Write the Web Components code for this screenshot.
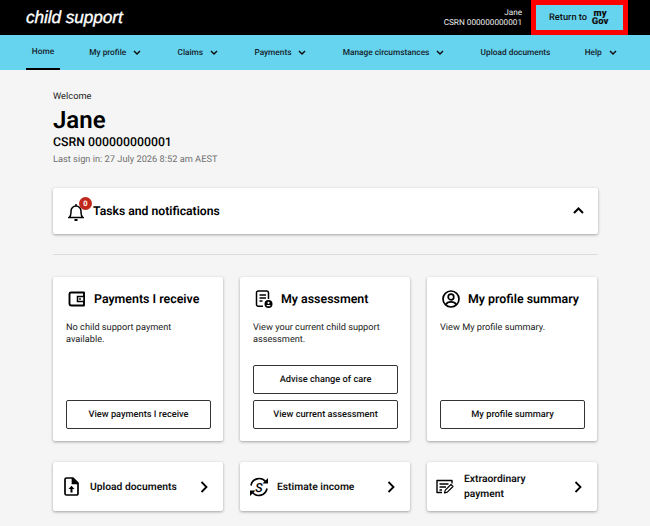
<!DOCTYPE html>
<html lang="en">
<head>
<meta charset="utf-8">
<title>Child support</title>
<style>
  html, body { margin: 0; padding: 0; }
  body { background: #f5f5f5; font-family: Roboto, "Liberation Sans", sans-serif; color: #000; width: 650px; height: 526px; overflow: hidden; text-rendering: geometricPrecision; }
</style>
</head>
<body>
<cs-header name="Jane" csrn="CSRN 000000000001"></cs-header>
<cs-nav>
  <cs-nav-item active style="width:34px;margin-right:-7px">Home</cs-nav-item>
  <cs-nav-item menu>My profile</cs-nav-item>
  <cs-nav-item menu>Claims</cs-nav-item>
  <cs-nav-item menu>Payments</cs-nav-item>
  <cs-nav-item menu>Manage circumstances</cs-nav-item>
  <cs-nav-item>Upload documents</cs-nav-item>
  <cs-nav-item menu style="margin-left:-2px">Help</cs-nav-item>
</cs-nav>
<cs-main>
  <cs-welcome name="Jane" csrn="CSRN 000000000001" signin="Last sign in: 27 July 2026 8:52 am AEST"></cs-welcome>
  <cs-tasks count="0">Tasks and notifications</cs-tasks>
  <cs-divider></cs-divider>
  <cs-grid>
    <cs-card heading="Payments I receive">
      <svg slot="icon" width="20" height="20" viewBox="0 0 20 20" fill="none" stroke="#000" stroke-width="1.9"><path d="M4 3.500h13v13H4.500A2 2 0 0 1 2.500 14.500V5A1.500 1.500 0 0 1 4 3.500z" stroke-linejoin="round"/><rect x="10.500" y="7.500" width="6.500" height="5" fill="#fff" stroke-width="1.500"/><circle cx="13" cy="10" r=".9" fill="#000" stroke="none"/></svg>
      No child support payment available.
      <cs-button slot="actions">View payments I receive</cs-button>
    </cs-card>
    <cs-card heading="My assessment">
      <svg slot="icon" width="20" height="20" viewBox="0 0 20 20" fill="none" stroke="#000" stroke-width="1.500"><path d="M9 17.200H4.200A1.700 1.700 0 0 1 2.500 15.500V3.700A1.700 1.700 0 0 1 4.200 2h8.600a1.700 1.700 0 0 1 1.700 1.700V10" stroke-linejoin="round"/><path d="M5.500 6h6.500M5.500 9h6.500M5.500 12h3"/><circle cx="14.500" cy="15" r="4" fill="#000" stroke="none"/><circle cx="14.500" cy="13.800" r="1.100" fill="#fff" stroke="none"/><path d="M12.700 16.600h3.600" stroke="#fff" stroke-width="1.200"/></svg>
      View your current child support assessment.
      <cs-button slot="actions">Advise change of care</cs-button>
      <cs-button slot="actions">View current assessment</cs-button>
    </cs-card>
    <cs-card heading="My profile summary">
      <svg slot="icon" width="20" height="20" viewBox="0 0 20 20" fill="none" stroke="#000" stroke-width="1.700"><circle cx="10" cy="10" r="8"/><circle cx="10" cy="8" r="2.800"/><path d="M4.800 15.500c1-2 3-2.700 5.200-2.700s4.200.7 5.200 2.700"/></svg>
      View My profile summary.
      <cs-button slot="actions">My profile summary</cs-button>
    </cs-card>
    <cs-link>
      <svg slot="icon" width="15" height="19" viewBox="0 0 15 19" fill="none" stroke="#000" stroke-width="1.700"><path d="M2.500 1h6.500l5 5V16.500A1.500 1.500 0 0 1 12.500 18h-10A1.500 1.500 0 0 1 1 16.500v-14A1.500 1.500 0 0 1 2.500 1z" stroke-linejoin="round"/><path d="M8.500 1v5.500H14" fill="#000"/><path d="M7.500 15.500v-4.500" stroke-width="2"/><path d="M4.500 12l3-3.200 3 3.200z" fill="#000" stroke="none"/></svg>
      Upload documents
    </cs-link>
    <cs-link>
      <svg slot="icon" width="22" height="22" viewBox="0 0 22 22" fill="none" stroke="#000" stroke-width="1.600"><path d="M3 9.500A8.300 8.300 0 0 1 17.500 5.500"/><path d="M19 12.500A8.300 8.300 0 0 1 4.500 16.500"/><path d="M20 2v5.500H14.500z" fill="#000" stroke="none"/><path d="M2 20v-5.500H7.500z" fill="#000" stroke="none"/><text x="11" y="15.500" text-anchor="middle" font-family="Roboto" font-size="12.500" font-style="italic" font-weight="500" fill="#000" stroke="none">S</text></svg>
      Estimate income
    </cs-link>
    <cs-link>
      <svg slot="icon" width="19" height="15" viewBox="0 0 19 15" fill="none" stroke="#000" stroke-width="1.400"><path d="M6 13.500H1V1.500h15v3" stroke-linejoin="round"/><path d="M3.500 5h9M3.500 8h6.500M3.500 11h2.500"/><path d="M8.500 14l.8-2.800L15 5.500l2 2-5.700 5.700z" stroke-width="1.200" stroke-linejoin="round"/></svg>
      <span style="display:block;width:70px">Extraordinary payment</span>
    </cs-link>
  </cs-grid>
</cs-main>

<script>
// header bar with the logo, the signed in user and the way back to myGov
class CsHeader extends HTMLElement {
  constructor() {
    super();
    this.attachShadow({ mode: 'open' }).innerHTML = `
      <style>
        :host { display: flex; align-items: center; height: 35px; background: #000; color: #fff; box-sizing: border-box; padding: 0 22px 0 26px; }
        .logo { font: italic 400 17.300px "Liberation Sans", Arial, sans-serif; -webkit-text-stroke: .35px #fff; letter-spacing: -.1px; flex: 1; margin-bottom: 1px; }
        .user { font-size: 8.200px; line-height: 10px; text-align: right; color: #eee; margin-right: 9px; }
        .back { display: flex; align-items: center; box-sizing: border-box; width: 97px; height: 35px; border: 5px solid #f00; background: #66d3ef; color: #111; font-size: 9.300px; font-weight: 500; padding-left: 13px; }
        .gov { width: 18px; margin: 1px 0 0 4px; font: 900 9.500px/8.500px Roboto, sans-serif; text-align: center; }
      </style>
      <div class="logo">child support</div>
      <div class="user"><div>${this.getAttribute('name')}</div><div>${this.getAttribute('csrn')}</div></div>
      <div class="back"><span>Return to</span><div class="gov">my Gov</div></div>`;
  }
}
customElements.define('cs-header', CsHeader);

class CsNav extends HTMLElement {
  constructor() {
    super();
    this.attachShadow({ mode: 'open' }).innerHTML = `
      <style>
        :host { display: flex; gap: 36.250px; height: 35px; background: #66d3ef; padding-left: 26px; box-sizing: border-box; }
      </style>
      <slot></slot>`;
  }
}
customElements.define('cs-nav', CsNav);

class CsNavItem extends HTMLElement {
  constructor() {
    super();
    const chevron = this.hasAttribute('menu')
      ? '<svg width="8" height="6" viewBox="0 0 8 6" fill="none" stroke="#111" stroke-width="1.500"><path d="M1 1l3 3 3-3"/></svg>'
      : '';
    this.attachShadow({ mode: 'open' }).innerHTML = `
      <style>
        :host { display: flex; align-items: center; justify-content: center; gap: 7px; height: 35px; box-sizing: border-box; font-size: 8.300px; font-weight: 500; color: #13232a; white-space: nowrap; }
        :host([active]) { border-bottom: 2px solid #000; }
      </style>
      <slot></slot>${chevron}`;
  }
}
customElements.define('cs-nav-item', CsNavItem);

class CsMain extends HTMLElement {
  constructor() {
    super();
    this.attachShadow({ mode: 'open' }).innerHTML = `
      <style>
        :host { display: block; padding: 20px 52px 0 53px; }
      </style>
      <slot></slot>`;
  }
}
customElements.define('cs-main', CsMain);

class CsWelcome extends HTMLElement {
  constructor() {
    super();
    this.attachShadow({ mode: 'open' }).innerHTML = `
      <style>
        :host { display: block; }
        .hi { font-size: 9.300px; line-height: 14px; color: #222; }
        h1 { margin: 2px 0 0; font-size: 24px; line-height: 28px; font-weight: 600; color: #000; }
        .csrn { font-size: 12.300px; line-height: 16px; font-weight: 500; margin-top: 1px; }
        .last { font-size: 9.250px; line-height: 14px; color: #707070; margin-top: 2px; }
      </style>
      <div class="hi">Welcome</div>
      <h1>${this.getAttribute('name')}</h1>
      <div class="csrn">${this.getAttribute('csrn')}</div>
      <div class="last">${this.getAttribute('signin')}</div>`;
  }
}
customElements.define('cs-welcome', CsWelcome);

class CsTasks extends HTMLElement {
  constructor() {
    super();
    this.attachShadow({ mode: 'open' }).innerHTML = `
      <style>
        :host { display: flex; align-items: center; position: relative; height: 46px; margin-top: 21px; background: #fff; border-radius: 2px; box-shadow: 0 1px 3px rgba(0,0,0,.35); padding: 0 14px 0 15px; font-size: 12.200px; font-weight: 600; }
        .bell { position: relative; width: 16px; height: 20px; margin-right: 9px; margin-top: 1px; }
        .badge { position: absolute; left: 11px; top: -5px; width: 13px; height: 13px; border-radius: 50%; background: #c0281c; color: #fff; font-size: 7.500px; font-weight: 700; text-align: center; line-height: 13px; }
        .title { flex: 1; padding-bottom: 1px; }
        .toggle { margin-bottom: 1px; }
      </style>
      <div class="bell">
        <svg width="16" height="20" viewBox="0 0 16 20" fill="none" stroke="#000" stroke-width="1.500"><path d="M1 15.500c1.500-1 2-2.500 2-5V9a5 5 0 0 1 10 0v1.500c0 2.500.5 4 2 5z"/><path d="M6.500 18h3" stroke-width="2"/><path d="M8 2v2"/></svg>
        <div class="badge">${this.getAttribute('count')}</div>
      </div>
      <div class="title"><slot></slot></div>
      <svg class="toggle" width="11" height="7" viewBox="0 0 11 7" fill="none" stroke="#000" stroke-width="2"><path d="M1 6l4.500-4.500L10 6"/></svg>`;
  }
}
customElements.define('cs-tasks', CsTasks);

class CsDivider extends HTMLElement {
  constructor() {
    super();
    this.attachShadow({ mode: 'open' }).innerHTML = `
      <style>
        :host { display: block; height: 1px; background: #dcdcdc; margin: 20px 0 22px; }
      </style>`;
  }
}
customElements.define('cs-divider', CsDivider);

class CsGrid extends HTMLElement {
  constructor() {
    super();
    this.attachShadow({ mode: 'open' }).innerHTML = `
      <style>
        :host { display: grid; grid-template-columns: 170px 170px 170px; grid-template-rows: 164px 49px; column-gap: 17px; row-gap: 21px; }
      </style>
      <slot></slot>`;
  }
}
customElements.define('cs-grid', CsGrid);

class CsCard extends HTMLElement {
  constructor() {
    super();
    this.attachShadow({ mode: 'open' }).innerHTML = `
      <style>
        :host { display: flex; flex-direction: column; background: #fff; border-radius: 2px; box-shadow: 0 1px 3px rgba(0,0,0,.35); padding: 12px 12px 12.500px 13px; box-sizing: border-box; }
        .head { display: flex; align-items: center; height: 20px; gap: 7px; margin-left: 1px; margin-bottom: 13px; }
        h2 { margin: 0; font-size: 12.400px; font-weight: 600; white-space: nowrap; color: #000; }
        .body { flex: 1; font-size: 9.200px; line-height: 11.500px; color: #222; padding-right: 1px; }
        .actions { display: flex; flex-direction: column; gap: 6.400px; }
      </style>
      <div class="head"><slot name="icon"></slot><h2>${this.getAttribute('heading')}</h2></div>
      <div class="body"><slot></slot></div>
      <div class="actions"><slot name="actions"></slot></div>`;
  }
}
customElements.define('cs-card', CsCard);

class CsButton extends HTMLElement {
  constructor() {
    super();
    this.attachShadow({ mode: 'open' }).innerHTML = `
      <style>
        :host { display: flex; align-items: center; justify-content: center; height: 28.600px; box-sizing: border-box; border: 1.500px solid #333; border-radius: 2px; background: #fff; padding-top: 1px; font-size: 9.250px; font-weight: 500; color: #111; }
      </style>
      <slot></slot>`;
  }
}
customElements.define('cs-button', CsButton);

class CsLink extends HTMLElement {
  constructor() {
    super();
    this.attachShadow({ mode: 'open' }).innerHTML = `
      <style>
        :host { display: flex; align-items: center; background: #fff; border-radius: 2px; box-shadow: 0 1px 3px rgba(0,0,0,.35); padding: 0 15px 0 0; font-size: 10.300px; font-weight: 600; line-height: 15px; color: #111; }
        .icon { width: 37px; display: flex; justify-content: center; flex: none; }
        .label { flex: 1; padding-bottom: 1px; }
      </style>
      <div class="icon"><slot name="icon"></slot></div>
      <div class="label"><slot></slot></div>
      <svg width="8" height="12" viewBox="0 0 8 12" fill="none" stroke="#000" stroke-width="1.800"><path d="M1.500 1l5 5-5 5"/></svg>`;
  }
}
customElements.define('cs-link', CsLink);
</script>
</body>
</html>
